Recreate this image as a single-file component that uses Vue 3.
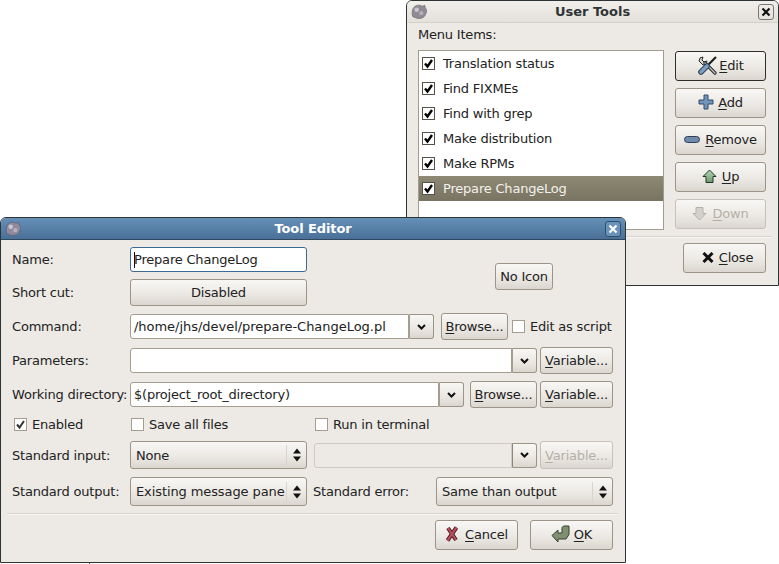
<template>
  <div class="desktop">
    <!-- User Tools window -->
    <section class="window tools-window">
      <header class="titlebar inactive">
        <svg class="app-icon" width="16" height="16" viewBox="1 1 14 14">
          <path d="M2 9c0-4 2-7 6-7 1 0 2 .5 3 1l2-1 .5 2.500c1 1 1.500 2.500 1 4-1 1.500-1 3-2.500 4-2 1.500-6 1.500-8 0C2.500 13 2 11 2 9z" fill="#8f8a96" stroke="#6d6875" stroke-width=".6"/>
          <circle cx="6" cy="6" r="2" fill="#c9c6cc"/>
          <circle cx="10" cy="9" r="1.800" fill="#b5b1ba"/>
        </svg>
        <span class="title">User Tools</span>
        <span class="close-box">
          <svg width="10" height="10" viewBox="0 0 10 10"><path d="M1.500 1.500l7 7M8.500 1.500l-7 7" stroke="#111" stroke-width="2.200"/></svg>
        </span>
      </header>
      <div class="tools-body">
        <div class="menu-label">Menu Items:</div>
        <div class="tools-main">
          <ul class="item-list">
            <li v-for="item in menuItems" :key="item" :class="{ selected: item === 'Prepare ChangeLog' }">
              <span class="check on">
                <svg width="11" height="11" viewBox="0 0 11 11"><path d="M2 5.500l2.500 3L9 2" fill="none" stroke="#000" stroke-width="2.400"/></svg>
              </span>
              <span>{{ item }}</span>
            </li>
          </ul>
          <div class="side-buttons">
            <button class="btn side edit-btn">
              <svg width="21" height="21" viewBox="0 0 21 21">
                <path d="M2 6a4 4 0 0 1 4-4l-1 3 2 2 3-1a4 4 0 0 1-4 4z" fill="#d5d5d2" stroke="#2b2b2b"/>
                <path d="M8 8l10 10" stroke="#2b2b2b" stroke-width="3.400" stroke-linecap="round"/>
                <path d="M8 8l10 10" stroke="#c4c4c0" stroke-width="1.300" stroke-linecap="round"/>
                <path d="M19 2l-9 9" stroke="#1d1d1d" stroke-width="2.200"/>
                <path d="M10 11l-6 6" stroke="#2c4763" stroke-width="5.600" stroke-linecap="round"/>
                <path d="M10 11l-6 6" stroke="#7f9fc0" stroke-width="3.400" stroke-linecap="round"/>
              </svg>
              <span><u>E</u>dit</span>
            </button>
            <button class="btn side add-btn">
              <svg width="16" height="16" viewBox="0 0 16 16"><path d="M6 1h4v5h5v4h-5v5H6v-5H1V6h5z" fill="#7394ba" stroke="#2e4a6b" stroke-linejoin="round"/></svg>
              <span><u>A</u>dd</span>
            </button>
            <button class="btn side arrow-side">
              <svg width="16" height="7" viewBox="0 0 16 7"><rect x=".5" y=".5" width="15" height="6" rx="3" fill="#6f8aab" stroke="#2f3f58"/></svg>
              <span><u>R</u>emove</span>
            </button>
            <button class="btn side arrow-side">
              <svg width="15" height="15" viewBox="0 0 15 15">
                <defs>
                  <linearGradient id="upFill" x1="0" y1="0" x2="0" y2="1">
                    <stop offset="0" stop-color="#b9d4b4"/>
                    <stop offset="1" stop-color="#6c9a70"/>
                  </linearGradient>
                </defs>
                <path d="M7.500 1L14 7.500h-3v6H4v-6H1z" fill="url(#upFill)" stroke="#20352a" stroke-linejoin="round"/>
              </svg>
              <span><u>U</u>p</span>
            </button>
            <button class="btn side arrow-side disabled">
              <svg width="15" height="15" viewBox="0 0 15 15"><path d="M7.500 14L14 7.500h-3v-6H4v6H1z" fill="#d3d1cc" stroke="#b4b1ab" stroke-linejoin="round"/></svg>
              <span><u>D</u>own</span>
            </button>
          </div>
        </div>
        <div class="separator tools-sep"></div>
        <div class="tools-footer">
          <button class="btn close-btn">
            <svg width="12" height="11" viewBox="0 0 12 11"><path d="M1.500 1l9 9M10.500 1l-9 9" stroke="#111" stroke-width="3"/></svg>
            <span><u>C</u>lose</span>
          </button>
        </div>
      </div>
    </section>

    <!-- a corner of another window, peeking out below the editor -->
    <span class="stray"></span>

    <!-- Tool Editor window -->
    <section class="window editor-window">
      <header class="titlebar active">
        <svg class="app-icon" width="16" height="16" viewBox="1 1 14 14">
          <path d="M2 9c0-4 2-7 6-7 1 0 2 .5 3 1l2-1 .5 2.500c1 1 1.500 2.500 1 4-1 1.500-1 3-2.500 4-2 1.500-6 1.500-8 0C2.500 13 2 11 2 9z" fill="#8f8a9e" stroke="#5e5a70" stroke-width=".6"/>
          <circle cx="6" cy="6" r="2" fill="#c9c6d0"/>
          <circle cx="10" cy="9" r="1.800" fill="#b5b1c0"/>
        </svg>
        <span class="title editor-title">Tool Editor</span>
        <span class="close-box light">
          <svg width="10" height="10" viewBox="0 0 10 10"><path d="M1.500 1.500l7 7M8.500 1.500l-7 7" stroke="#fff" stroke-width="2.200"/></svg>
        </span>
      </header>
      <div class="editor-body">
        <div class="head-rows">
          <div class="head-fields">
            <div class="row name-row">
              <label class="lbl">Name:</label>
              <div class="entry focus-entry"><span class="caret"></span>Prepare ChangeLog</div>
            </div>
            <div class="row shortcut-row">
              <label class="lbl">Short cut:</label>
              <button class="btn shortcut">Disabled</button>
            </div>
          </div>
          <button class="btn no-icon">No Icon</button>
        </div>

        <div class="row command-row">
          <label class="lbl">Command:</label>
          <div class="combo cmd-combo">
            <div class="entry in-combo wide-text">/home/jhs/devel/prepare-ChangeLog.pl</div>
            <span class="arrow-btn"><svg width="9" height="6" viewBox="0 0 9 6"><path d="M1 1l3.500 3.500L8 1" fill="none" stroke="#111" stroke-width="2"/></svg></span>
          </div>
          <button class="btn small browse cmd-browse"><span><u>B</u>rowse...</span></button>
          <label class="checkline script-check"><span class="check"></span>Edit as script</label>
        </div>

        <div class="row params-row">
          <label class="lbl">Parameters:</label>
          <div class="combo grow">
            <div class="entry in-combo"></div>
            <span class="arrow-btn"><svg width="9" height="6" viewBox="0 0 9 6"><path d="M1 1l3.500 3.500L8 1" fill="none" stroke="#111" stroke-width="2"/></svg></span>
          </div>
          <button class="btn small variable"><span><u>V</u>ariable...</span></button>
        </div>

        <div class="row dir-row">
          <label class="lbl">Working directory:</label>
          <div class="combo grow">
            <div class="entry in-combo">$(project_root_directory)</div>
            <span class="arrow-btn"><svg width="9" height="6" viewBox="0 0 9 6"><path d="M1 1l3.500 3.500L8 1" fill="none" stroke="#111" stroke-width="2"/></svg></span>
          </div>
          <button class="btn small browse"><span><u>B</u>rowse...</span></button>
          <button class="btn small variable"><span><u>V</u>ariable...</span></button>
        </div>

        <div class="row checks-row">
          <label class="checkline enabled-check">
            <span class="check on soft">
              <svg width="11" height="11" viewBox="0 0 11 11"><path d="M2 5.500l2.500 3L9 2" fill="none" stroke="#333" stroke-width="2"/></svg>
            </span>Enabled
          </label>
          <label class="checkline save-check"><span class="check"></span>Save all files</label>
          <label class="checkline"><span class="check"></span>Run in terminal</label>
        </div>

        <div class="row input-row">
          <label class="lbl">Standard input:</label>
          <div class="select std">
            <span class="select-text">None</span>
            <span class="spin"><svg width="10" height="16" viewBox="0 0 10 16"><path d="M5 1.500l4 5H1zM5 14.500l4-5H1z" fill="#111"/></svg></span>
          </div>
          <div class="combo grow disabled-combo">
            <div class="entry in-combo"></div>
            <span class="arrow-btn"><svg width="9" height="6" viewBox="0 0 9 6"><path d="M1 1l3.500 3.500L8 1" fill="none" stroke="#111" stroke-width="2"/></svg></span>
          </div>
          <button class="btn small variable disabled tall"><span><u>V</u>ariable...</span></button>
        </div>

        <div class="row output-row">
          <label class="lbl">Standard output:</label>
          <div class="select std out">
            <span class="select-text">Existing message pane</span>
            <span class="spin"><svg width="10" height="16" viewBox="0 0 10 16"><path d="M5 1.500l4 5H1zM5 14.500l4-5H1z" fill="#111"/></svg></span>
          </div>
          <label class="err-label">Standard error:</label>
          <div class="select err">
            <span class="select-text">Same than output</span>
            <span class="spin"><svg width="10" height="16" viewBox="0 0 10 16"><path d="M5 1.500l4 5H1zM5 14.500l4-5H1z" fill="#111"/></svg></span>
          </div>
        </div>

        <div class="separator editor-sep"></div>

        <div class="editor-footer">
          <button class="btn foot cancel">
            <svg width="14" height="16" viewBox="0 0 14 16">
              <path d="M3 2l8 12M11.500 1.500L2.500 14.500" stroke="#4a1820" stroke-width="4"/>
              <path d="M3 2l8 12M11.500 1.500L2.500 14.500" stroke="#b84f5c" stroke-width="2.200"/>
            </svg>
            <span><u>C</u>ancel</span>
          </button>
          <button class="btn foot ok">
            <svg width="19" height="18" viewBox="0 0 19 18"><path d="M1 10.500L7 5v3h4V2.500L12.500 1H18v8.500L15 14H7v3z" fill="#7f9070" stroke="#36412f" stroke-linejoin="round"/></svg>
            <span><u>O</u>K</span>
          </button>
        </div>
      </div>
    </section>
  </div>
</template>

<script setup>
const menuItems = [
  'Translation status',
  'Find FIXMEs',
  'Find with grep',
  'Make distribution',
  'Make RPMs',
  'Prepare ChangeLog'
]
</script>

<style>
html, body {
  margin: 0;
  background: #fff;
}
</style>

<style scoped>
.desktop {
  position: relative;
  width: 779px;
  height: 564px;
  overflow: hidden;
  background: #fff;
  font-family: "DejaVu Sans", sans-serif;
  font-size: 13px;
  letter-spacing: -0.2px;
  color: #222;
}

/* Windows sit on a free canvas */
.window {
  position: absolute;
  box-sizing: border-box;
  background: #edeae5;
  border: 1px solid #2e3436;
  border-radius: 6px 6px 0 0;
}

.tools-window {
  left: 406px;
  top: 0;
  width: 373px;
  height: 286px;
}

.editor-window {
  left: 0;
  top: 217px;
  width: 626px;
  height: 346px;
}

.stray {
  position: absolute;
  left: 89px;
  top: 563px;
  width: 1px;
  height: 1px;
  background: #666;
}

.titlebar {
  display: flex;
  align-items: center;
  height: 21px;
  padding: 0 4px;
  border-radius: 5px 5px 0 0;
  font-weight: bold;
  letter-spacing: 0;
}

.titlebar.inactive {
  background: linear-gradient(#f1efeb, #e4e0da);
  color: #2e3436;
  border-bottom: 1px solid #d5d0c8;
}

.titlebar.active {
  background: linear-gradient(#6590b8, #4a7097);
  color: #fff;
  border-bottom: 1px solid #2f4860;
}

.app-icon {
  flex: none;
}

.title {
  flex: 1;
  text-align: center;
}

.editor-title {
  letter-spacing: -0.1px;
}

.close-box {
  display: flex;
  align-items: center;
  justify-content: center;
  width: 14px;
  height: 14px;
  border: 1px solid #777;
  border-radius: 3px;
}

.close-box.light {
  border-color: #2f4d6c;
  background: #6a93ba;
}

/* User Tools */
.tools-body {
  padding: 0 11px;
}

.menu-label {
  height: 17px;
  margin-top: 3px;
  line-height: 17px;
}

.tools-main {
  display: flex;
  gap: 11px;
  margin-top: 7px;
}

.item-list {
  box-sizing: border-box;
  width: 246px;
  height: 180px;
  margin: 0;
  padding: 0;
  list-style: none;
  background: #fff;
  border: 1px solid #a29c8f;
}

.item-list li {
  display: flex;
  align-items: center;
  gap: 8px;
  height: 25px;
  padding-left: 3px;
  box-sizing: border-box;
}

.item-list li.selected {
  background: linear-gradient(#8d8974, #787461);
  color: #f4f2ee;
}

.side-buttons {
  display: flex;
  flex-direction: column;
  gap: 7px;
  margin-top: 1px;
}

.check {
  display: inline-flex;
  align-items: center;
  justify-content: center;
  flex: none;
  box-sizing: border-box;
  width: 13px;
  height: 13px;
  background: #fff;
  border: 1px solid #a49d90;
}

.check.on {
  border-color: #55524c;
}

.check.soft {
  border-color: #a49d90;
}

.btn {
  display: inline-flex;
  align-items: center;
  justify-content: center;
  box-sizing: border-box;
  margin: 0;
  padding: 0;
  font: inherit;
  letter-spacing: inherit;
  color: #222;
  background: linear-gradient(#f8f7f5, #ece9e4 55%, #dbd6cf);
  border: 1px solid #9c9486;
  border-radius: 3px;
}

.btn u {
  text-underline-offset: 2px;
}

.btn.side {
  width: 91px;
  height: 30px;
  gap: 4px;
  padding-bottom: 2px;
}

.btn.edit-btn {
  gap: 1px;
  border-color: #2e2e2c;
}

.btn.arrow-side {
  gap: 5px;
}

.btn.disabled {
  color: #b4b0a8;
  border-color: #c6c1b8;
}

.close-btn {
  width: 83px;
  height: 30px;
  gap: 5px;
  margin-right: 1px;
  padding: 0 0 2px 6px;
}

.separator {
  height: 1px;
  background: #d8d4cc;
  border-bottom: 1px solid #f7f6f3;
}

.tools-sep {
  margin: 6px -5px 0 -5px;
}

.tools-footer {
  display: flex;
  justify-content: flex-end;
  margin-top: 5px;
}

/* Tool Editor */
.editor-body {
  padding: 7px 12px 0 11px;
}

.row {
  display: flex;
  align-items: center;
}

.lbl {
  flex: none;
  width: 118px;
  white-space: nowrap;
}

.head-rows {
  display: flex;
  align-items: center;
}

.head-fields {
  display: flex;
  flex-direction: column;
  gap: 7px;
}

.no-icon {
  width: 58px;
  height: 27px;
  margin-left: 188px;
}

.name-row {
  height: 25px;
}

.shortcut-row {
  height: 27px;
}

.entry {
  box-sizing: border-box;
  display: flex;
  align-items: center;
  height: 25px;
  padding-left: 3px;
  background: #fff;
  border: 1px solid #a49d90;
  border-radius: 3px;
  white-space: nowrap;
  overflow: hidden;
}

.wide-text {
  letter-spacing: -0.03px;
}

.focus-entry {
  position: relative;
  width: 177px;
  border-color: #3d6a94;
}

.caret {
  position: absolute;
  left: 3px;
  top: 4px;
  width: 1px;
  height: 16px;
  background: #111;
}

.shortcut {
  width: 177px;
  height: 27px;
}

.command-row,
.params-row,
.dir-row {
  height: 27px;
  margin-top: 7px;
}

.checks-row {
  height: 15px;
  margin-top: 9px;
}

.input-row {
  height: 28px;
  margin-top: 9px;
}

.output-row {
  height: 29px;
  margin-top: 8px;
}

.combo {
  display: flex;
  height: 25px;
  box-sizing: border-box;
}

.cmd-combo {
  width: 304px;
}

.combo.grow {
  flex: 1;
}

.in-combo {
  flex: 1;
  min-width: 0;
  border-radius: 3px 0 0 3px;
}

.arrow-btn {
  flex: none;
  display: flex;
  align-items: center;
  justify-content: center;
  box-sizing: border-box;
  width: 25px;
  background: linear-gradient(#f8f7f5, #ece9e4 55%, #dbd6cf);
  border: 1px solid #9c9486;
  border-left-color: #a49d90;
  border-radius: 0 3px 3px 0;
}

.btn.small {
  flex: none;
  height: 27px;
  margin-left: 6px;
}

.btn.cmd-browse {
  margin-left: 7px;
}

.browse {
  width: 67px;
}

.btn.variable {
  width: 73px;
  margin-left: 3px;
}

.btn.tall {
  height: 28px;
}

.checkline {
  display: flex;
  align-items: center;
  gap: 5px;
  white-space: nowrap;
}

.script-check {
  margin-left: 4px;
}

.enabled-check {
  width: 119px;
  padding-left: 2px;
  box-sizing: border-box;
}

.save-check {
  width: 184px;
}

.select {
  display: flex;
  align-items: center;
  box-sizing: border-box;
  width: 177px;
  height: 100%;
  background: linear-gradient(#f8f7f5, #ece9e4 55%, #dbd6cf);
  border: 1px solid #9c9486;
  border-radius: 3px;
}

.select-text {
  flex: 1;
  padding-left: 5px;
  white-space: nowrap;
  overflow: hidden;
}

.spin {
  display: flex;
  align-items: center;
  justify-content: center;
  flex: none;
  width: 19px;
  height: 20px;
  border-left: 1px solid #d8d4cc;
}

.select.std {
  margin-right: 7px;
}

.select.std.out {
  margin-right: 6px;
}

.out .select-text {
  letter-spacing: -0.1px;
}

.err-label {
  flex: none;
  width: 123px;
  white-space: nowrap;
}

.select.err {
  flex: 1;
}

.disabled-combo .in-combo {
  background: #edeae5;
  border-color: #cfcbc3;
}

.disabled-combo .arrow-btn {
  border-left-color: #8d8678;
}

.editor-sep {
  margin: 7px -5px 0 -5px;
}

.editor-footer {
  display: flex;
  justify-content: flex-end;
  gap: 12px;
  margin-top: 5px;
}

.btn.foot {
  width: 83px;
  height: 30px;
  gap: 6px;
  padding-bottom: 2px;
}

.btn.foot.ok {
  gap: 4px;
}
</style>
